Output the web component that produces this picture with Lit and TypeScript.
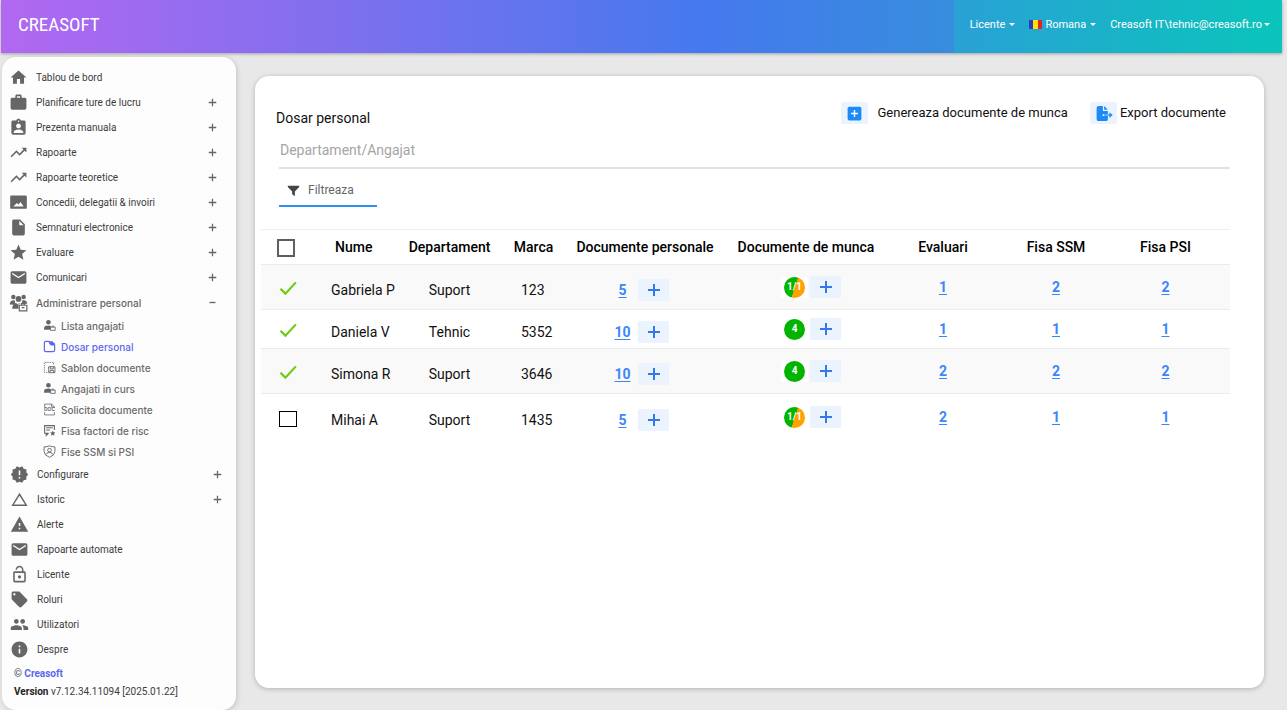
import { LitElement, html, css, svg, nothing, type TemplateResult } from "lit";
import { customElement, property } from "lit/decorators.js";
import { classMap } from "lit/directives/class-map.js";

/* 24-unit glyphs; even-odd filling keeps the cut-outs transparent. */
const glyphs: Record<string, string> = {
  home: "M10 20v-6h4v6h5v-8h3L12 3 2 12h3v8z",
  work: "M20 6h-4V4c0-1.11-.89-2-2-2h-4c-1.11 0-2 .89-2 2v2H4c-1.11 0-2 .89-2 2v11c0 1.11.89 2 2 2h16c1.11 0 2-.89 2-2V8c0-1.11-.89-2-2-2zm-6 0h-4V4h4v2z",
  badge: "M19 3h-4.18C14.4 1.84 13.3 1 12 1c-1.3 0-2.4.84-2.82 2H5c-1.1 0-2 .9-2 2v14c0 1.1.9 2 2 2h14c1.1 0 2-.9 2-2V5c0-1.1-.9-2-2-2zm-7 0c.55 0 1 .45 1 1s-.45 1-1 1-1-.45-1-1 .45-1 1-1zm0 4c1.66 0 3 1.34 3 3s-1.34 3-3 3-3-1.34-3-3 1.34-3 3-3zm6 12H6v-1.4c0-2 4-3.1 6-3.1s6 1.1 6 3.1V19z",
  trend: "M16 6l2.29 2.29-4.88 4.88-4-4L2 16.59 3.41 18l6-6 4 4 6.3-6.29L22 12V6z",
  image: "M3 3h18q1.500 0 1.500 1.500v14q0 1.500-1.500 1.500H3q-1.500 0-1.500-1.500v-14Q1.500 3 3 3zM5.500 17h13l-4-5.500-2.500 3-2-2z",
  file: "M6 2c-1.1 0-2 .9-2 2v16c0 1.1.9 2 2 2h12c1.1 0 2-.9 2-2V8l-6-6H6zm7 7V3.5L18.5 9H13z",
  star: "M12 17.27L18.18 21l-1.64-7.03L22 9.24l-7.19-.61L12 2 9.19 8.63 2 9.24l5.46 4.73L5.82 21z",
  mail: "M20 4H4c-1.1 0-2 .9-2 2v12c0 1.1.9 2 2 2h16c1.1 0 2-.9 2-2V6c0-1.1-.9-2-2-2zm0 4l-8 5-8-5V6l8 5 8-5v2z",
  release: "M23 12l-2.44-2.78.34-3.68-3.61-.82-1.89-3.18L12 3 8.6 1.54 6.71 4.72l-3.61.81.34 3.68L1 12l2.44 2.78-.34 3.69 3.61.82 1.89 3.18L12 21l3.4 1.46 1.89-3.18 3.61-.82-.34-3.68L23 12zm-10 5h-2v-2h2v2zm0-4h-2V7h2v6z",
  triangle: "M12 7.2L19 18.300H5L12 7.2zM12 3.500L1.800 20.200h20.400L12 3.500z",
  warning: "M1 21h22L12 2 1 21zm12-3h-2v-2h2v2zm0-4h-2v-4h2v4z",
  lock: "M12 17c1.1 0 2-.9 2-2s-.9-2-2-2-2 .9-2 2 .9 2 2 2zm6-9h-1V6c0-2.76-2.24-5-5-5S7 3.24 7 6h1.9c0-1.71 1.39-3.1 3.1-3.1 1.71 0 3.1 1.39 3.1 3.1v2H6c-1.1 0-2 .9-2 2v10c0 1.1.9 2 2 2h12c1.1 0 2-.9 2-2V10c0-1.1-.9-2-2-2zm0 12H6V10h12v10z",
  tag: "M21.41 11.58l-9-9C12.05 2.22 11.55 2 11 2H4c-1.1 0-2 .9-2 2v7c0 .55.22 1.05.59 1.42l9 9c.36.36.86.58 1.41.58.55 0 1.05-.22 1.41-.59l7-7c.37-.36.59-.86.59-1.41 0-.55-.23-1.06-.59-1.42zM5.5 7C4.67 7 4 6.33 4 5.5S4.67 4 5.5 4 7 4.67 7 5.5 6.33 7 5.5 7z",
  group: "M16 11c1.66 0 3-1.34 3-3s-1.34-3-3-3-3 1.34-3 3 1.34 3 3 3zm-8 0c1.66 0 3-1.34 3-3S9.66 5 8 5 5 6.34 5 8s1.34 3 3 3zm0 2c-2.33 0-7 1.17-7 3.5V19h14v-2.5c0-2.33-4.67-3.5-7-3.5zm8 0c-.29 0-.62.02-.97.05 1.16.84 1.97 1.97 1.97 3.45V19h6v-2.5c0-2.33-4.67-3.5-7-3.5z",
  info: "M12 2C6.480 2 2 6.480 2 12s4.480 10 10 10 10-4.480 10-10S17.520 2 12 2zm1 15h-2v-6h2v6zm0-8h-2V7h2v2z",
};

const employee = svg`
  <circle cx="10" cy="6" r="4.200"/>
  <path d="M2 20v-3.500C2 13.500 6 12 10 12q2.500 0 4.500.8V20z"/>
  <path d="M14 15h8.500v6H14z" fill="#fdfdfd" stroke="currentColor" stroke-width="1.600"/>
  <path d="M16.500 15v-1.800h3.500V15" fill="none" stroke="currentColor" stroke-width="1.400"/>`;

const drawings: Record<string, TemplateResult | ReturnType<typeof svg>> = {
  team: svg`
    <circle cx="5.500" cy="5" r="2.800"/><circle cx="18.500" cy="5" r="2.800"/>
    <circle cx="12" cy="7.500" r="3.600"/>
    <path d="M1 14.500Q1 9.500 5.500 9q1.200 0 2 .6-.8 2.600 1.200 4.400l-1 .8zM23 13.500Q23 9.500 18.500 9q-1.200 0-2 .6.800 2.400-1 4.400z"/>
    <path d="M4 20q0-6.500 5-7.500l3 2.500 3-2.500q1 .2 1.800.9H12V20z"/>
    <path d="M13 15.500h9.500v7H13zM16 15.500v-2h3.500v2M16 18.500h3.500" fill="none" stroke="currentColor" stroke-width="1.500"/>`,
  employee,
  folder: svg`
    <path d="M2.500 5.500Q2.500 2.500 5 2.500h4.500q1.500 0 2.200 1.200L13 6h5.500q3 0 3 3v9.500q0 3-3 3H5.500q-3 0-3-3z"
      fill="none" stroke="currentColor" stroke-width="2.200"/>
    <path d="M10 2.500h7.500l4 4.500v3H15q-2 0-2.500-2z"/>`,
  template: svg`
    <path d="M8 21H2.500V2.500h17V8" fill="none" stroke="currentColor" stroke-width="1.500" stroke-dasharray="2.600 1.600"/>
    <path d="M10.500 10.500h11.500v11H10.500zM13.500 10.500v4h5.500v-4M13 21.500v-4h6.500v4" fill="none" stroke="currentColor" stroke-width="1.700"/>`,
  doc: svg`
    <path d="M3 7.500V2h13l5 5v1M3 17v5h18v-5M15.500 2v5.500H21" fill="none" stroke="currentColor" stroke-width="1.500"/>
    <text class="doc-text" x="12" y="15.500" text-anchor="middle">DOC</text>`,
  risk: svg`
    <path d="M21 11V3H3v14h8M6 7h12M6 11h7M6 17v4l3-3" fill="none" stroke="currentColor" stroke-width="2"/>
    <path d="M18 12l1.500 3.400 3.500.4-2.600 2.400.8 3.600-3.200-1.800-3.200 1.800.8-3.600-2.600-2.400 3.500-.4z"/>`,
  shield: svg`
    <path d="M12 1.500q4 2 10 2V12q0 7-10 10.800Q2 19 2 12V3.500q6 0 10-2z" fill="none" stroke="currentColor" stroke-width="1.700"/>
    <circle cx="12" cy="9.500" r="3.400" fill="none" stroke="currentColor" stroke-width="1.700"/>
    <path d="M6 17.500q1-4 6-4t6 4" fill="none" stroke="currentColor" stroke-width="1.700"/>`,
  filter: svg`<path d="M1.500 3h21v2.500L14.500 14v8.500l-5-3.800V14L1.500 5.500z"/>`,
  addBox: svg`
    <rect x="1" y="1" width="22" height="22" rx="2.500"/>
    <path d="M12 6.500v11M6.500 12h11" stroke="#fff" stroke-width="2.200"/>`,
  exportDoc: svg`
    <path d="M1 3q0-3 3-3h7v8h8v5h-8.500v3H19v5q0 3-3 3H4q-3 0-3-3z"/>
    <path d="M13 0l6 6h-6z"/>
    <path d="M13 14.500h10" stroke="currentColor" stroke-width="2"/>
    <path d="M21.500 9.800l5.200 4.700-5.200 4.700z"/>`,
  plus: svg`<path d="M12 2v20M2 12h20" fill="none" stroke="currentColor" stroke-width="3.400"/>`,
  minus: svg`<path d="M4 12h16" fill="none" stroke="currentColor" stroke-width="3.600"/>`,
  check: svg`<path d="M2 13l6.500 6.500L22.500 4.500" fill="none" stroke="currentColor" stroke-width="2.900"/>`,
};

@customElement("ui-icon")
export class UiIcon extends LitElement {
  @property() name = "";
  static styles = css`
    :host { display: block; flex: none; width: 19px; height: 19px; }
    .glyph { display: block; width: 100%; height: 100%; fill: currentColor; fill-rule: evenodd; overflow: visible; }
    .doc-text { font: 700 9px "Liberation Sans", sans-serif; }
  `;
  render() {
    const path = glyphs[this.name];
    return html`<svg class="glyph" viewBox="0 0 24 24" aria-hidden="true">
      ${path ? svg`<path d=${path} />` : drawings[this.name] ?? nothing}
    </svg>`;
  }
}

interface NavItem { icon: string; label: string; toggle?: "plus" | "minus"; active?: boolean; }

const mainNav: NavItem[] = [
  { icon: "home", label: "Tablou de bord" },
  { icon: "work", label: "Planificare ture de lucru", toggle: "plus" },
  { icon: "badge", label: "Prezenta manuala", toggle: "plus" },
  { icon: "trend", label: "Rapoarte", toggle: "plus" },
  { icon: "trend", label: "Rapoarte teoretice", toggle: "plus" },
  { icon: "image", label: "Concedii, delegatii & invoiri", toggle: "plus" },
  { icon: "file", label: "Semnaturi electronice", toggle: "plus" },
  { icon: "star", label: "Evaluare", toggle: "plus" },
  { icon: "mail", label: "Comunicari", toggle: "plus" },
];
const adminNav: NavItem[] = [
  { icon: "employee", label: "Lista angajati" },
  { icon: "folder", label: "Dosar personal", active: true },
  { icon: "template", label: "Sablon documente" },
  { icon: "employee", label: "Angajati in curs" },
  { icon: "doc", label: "Solicita documente" },
  { icon: "risk", label: "Fisa factori de risc" },
  { icon: "shield", label: "Fise SSM si PSI" },
];
const systemNav: NavItem[] = [
  { icon: "release", label: "Configurare", toggle: "plus" },
  { icon: "triangle", label: "Istoric", toggle: "plus" },
  { icon: "warning", label: "Alerte" },
  { icon: "mail", label: "Rapoarte automate" },
  { icon: "lock", label: "Licente" },
  { icon: "tag", label: "Roluri" },
  { icon: "group", label: "Utilizatori" },
  { icon: "info", label: "Despre" },
];

@customElement("side-nav")
export class SideNav extends LitElement {
  static styles = css`
    :host {
      display: flex; flex-direction: column; flex: none; box-sizing: border-box; width: 234px;
      margin: 4px 0 0 2px; padding: 8px 0; border-radius: 14px; background: #fdfdfd;
      box-shadow: 1px 1px 5px rgba(0, 0, 0, 0.16); color: #3c3c3c; font: 10px/16px Roboto, sans-serif;
    }
    .list { margin: 0; padding: 0; list-style: none; }
    .row { display: flex; align-items: center; height: 25px; padding: 0 19px 0 7px; }
    .row.admin { color: #666; font: 500 10px/16px Inter, sans-serif; }
    .row.system { padding: 0 14px 0 8px; }
    .row.sub { height: 21px; padding: 0 19px 0 41px; color: #6b6b6b; font: 500 10px/16px Inter, sans-serif; }
    .row.sub .link { gap: 5px; }
    .row.sub .icon { width: 13px; height: 13px; }
    .link { display: flex; flex: 1; align-items: center; gap: 8px; color: inherit; text-decoration: none; }
    .icon { color: #666; }
    .row.active, .row.active .icon { color: #5b67f1; }
    .toggle { padding: 0; border: 0; background: none; color: #666; }
    .toggle ui-icon { width: 9px; height: 9px; }
    .about { margin: 3px 0 0 12px; line-height: 18px; }
    .line { margin: 0; }
    .brand { color: #5b67f1; font-weight: 700; text-decoration: none; }
    .version { color: #222; font-weight: 700; }
  `;
  private row(item: NavItem, kind: string) {
    return html`<li class=${classMap({ row: true, [kind]: true, active: !!item.active })}>
      <a class="link" href="#"><ui-icon class="icon" name=${item.icon}></ui-icon>${item.label}</a>
      ${item.toggle
        ? html`<button class="toggle" aria-label=${item.label}><ui-icon name=${item.toggle}></ui-icon></button>`
        : nothing}
    </li>`;
  }
  render() {
    return html`
      <nav>
        <ul class="list">
          ${mainNav.map((i) => this.row(i, "main"))}
          ${this.row({ icon: "team", label: "Administrare personal", toggle: "minus" }, "admin")}
          ${adminNav.map((i) => this.row(i, "sub"))}
          ${systemNav.map((i) => this.row(i, "system"))}
        </ul>
      </nav>
      <footer class="about">
        <p class="line">© <a class="brand" href="#">Creasoft</a></p>
        <p class="line"><span class="version">Version</span> v7.12.34.11094 [2025.01.22]</p>
      </footer>`;
  }
}

@customElement("top-bar")
export class TopBar extends LitElement {
  static styles = css`
    :host {
      display: flex; justify-content: space-between; height: 53px; margin: 0 5px 0 1px;
      background: linear-gradient(90deg, #b268f1, #826fee 25%, #4579ee 55%, #378dde 74%, #378dde);
      box-shadow: 0 1px 3px rgba(0, 0, 0, 0.3); font-family: Roboto, sans-serif;
    }
    .logo {
      align-self: center; margin-left: 17px; padding-bottom: 3px; color: #fff; text-decoration: none;
      font: 19px/24px "Roboto Condensed", "Liberation Sans Narrow", sans-serif;
    }
    .menu {
      display: flex; align-items: center; gap: 14px; box-sizing: border-box; padding: 0 12px 4px 16px;
      background: linear-gradient(90deg, #29a1d5, #0ac5bb);
    }
    .item {
      display: flex; align-items: center; gap: 4px; padding: 0; border: 0; background: none;
      color: #fff; font: 11px/16px Roboto, sans-serif;
    }
    .item.user { gap: 2px; }
    .label { display: flex; align-items: center; gap: 3px; }
    .caret { border: 3px solid transparent; border-top-color: #fff; border-bottom: 0; }
    .flag { width: 13px; height: 9px; background: linear-gradient(90deg, #2a3bc0 33%, #ffe100 33% 67%, #e3202d 67%); }
  `;
  render() {
    return html`
      <a class="logo" href="#">CREASOFT</a>
      <div class="menu">
        <button class="item">Licente<span class="caret"></span></button>
        <button class="item"><span class="label"><span class="flag"></span>Romana</span><span class="caret"></span></button>
        <button class="item user">Creasoft IT\\tehnic@creasoft.ro<span class="caret"></span></button>
      </div>`;
  }
}

interface Employee {
  name: string; dept: string; id: string; docs: number; work: string;
  evals: number; ssm: number; psi: number; checked: boolean;
}
const employees: Employee[] = [
  { name: "Gabriela P", dept: "Suport", id: "123", docs: 5, work: "1/1", evals: 1, ssm: 2, psi: 2, checked: true },
  { name: "Daniela V", dept: "Tehnic", id: "5352", docs: 10, work: "4", evals: 1, ssm: 1, psi: 1, checked: true },
  { name: "Simona R", dept: "Suport", id: "3646", docs: 10, work: "4", evals: 2, ssm: 2, psi: 2, checked: true },
  { name: "Mihai A", dept: "Suport", id: "1435", docs: 5, work: "1/1", evals: 2, ssm: 1, psi: 1, checked: false },
];

@customElement("staff-table")
export class StaffTable extends LitElement {
  static styles = css`
    :host { display: block; color: #111; font: 14px/20px Roboto, sans-serif; }
    .table { width: 100%; border-collapse: collapse; table-layout: fixed; border-top: 1px solid #eee; }
    .c-check { width: 56px; } .c-name { width: 88px; } .c-dept { width: 89px; }
    .c-id { width: 79px; } .c-docs { width: 144px; } .c-work { width: 178px; }
    .c-eval { width: 96px; } .c-ssm { width: 130px; } .c-psi { width: 109px; }
    .head { height: 34px; padding: 0; color: #000; font-weight: 500; white-space: nowrap; }
    .row { height: 45px; border-top: 1px solid #ebebeb; }
    .row:nth-child(even) { height: 39px; }
    .row:last-child { height: 47px; }
    .row:nth-child(odd) { background: #f9f9f9; }
    .cell { padding: 0; text-align: center; }
    .low { padding-top: 5px; }
    .name { padding-left: 14px; text-align: left; }
    .head.name { padding-left: 18px; }
    .id { padding-left: 27px; text-align: left; }
    .last { padding-right: 20px; }
    .pick { text-align: left; padding-left: 16px; }
    .tick { display: inline-grid; place-items: center; vertical-align: middle; }
    .box {
      grid-area: 1 / 1; box-sizing: border-box; width: 18px; height: 18px; margin: 0;
      appearance: none; border: 2px solid #5f5f5f; background: #fff;
    }
    .row .tick { margin-left: 2px; }
    .row .box { height: 16px; border: 1px solid #000; }
    .row .box:checked { border: 0; background: none; }
    .mark { display: none; grid-area: 1 / 1; width: 18px; height: 18px; color: #6ccb12; pointer-events: none; }
    .box:checked + .mark { display: block; }
    .num { color: #3b86fb; font-weight: 700; text-decoration: underline; text-underline-offset: 2px; text-decoration-thickness: 1px; }
    .pair { display: flex; align-items: center; justify-content: center; }
    .pair.docs { padding-right: 14px; }
    .pair.work { padding-left: 10px; gap: 2px; }
    .count { width: 31px; }
    .add {
      display: grid; place-items: center; width: 31px; height: 22px; padding: 0;
      border: 0; background: #ebf3ff; color: #3478ea;
    }
    .frame { padding: 0 3px; background: #fff; }
    .dot {
      display: grid; place-items: center; width: 21px; height: 21px; border-radius: 50%;
      background: #00b400; color: #fff; font: 700 10px/12px Roboto, sans-serif;
    }
    .dot.split { background: linear-gradient(108deg, #00b400 50%, #ffa200 52%); }
  `;
  private add(label: string) {
    return html`<button class="add" aria-label=${label}>
      <svg width="14" height="14" viewBox="0 0 14 14" aria-hidden="true">
        <path d="M7 1v12M1 7h12" stroke="currentColor" stroke-width="2" />
      </svg>
    </button>`;
  }
  private tick(label: string, checked: boolean) {
    return html`<label class="tick">
      <input class="box" type="checkbox" aria-label=${label} .checked=${checked} />
      <ui-icon class="mark" name="check"></ui-icon>
    </label>`;
  }
  render() {
    return html`<table class="table">
      <colgroup>
        <col class="c-check" /><col class="c-name" /><col class="c-dept" /><col class="c-id" /><col class="c-docs" />
        <col class="c-work" /><col class="c-eval" /><col class="c-ssm" /><col class="c-psi" />
      </colgroup>
      <thead>
        <tr>
          <th class="head pick">${this.tick("Toti", false)}</th>
          <th class="head name">Nume</th>
          <th class="head">Departament</th>
          <th class="head">Marca</th>
          <th class="head">Documente personale</th>
          <th class="head">Documente de munca</th>
          <th class="head">Evaluari</th>
          <th class="head">Fisa SSM</th>
          <th class="head last">Fisa PSI</th>
        </tr>
      </thead>
      <tbody>
        ${employees.map((e) => html`<tr class="row">
          <td class="cell pick">${this.tick(e.name, e.checked)}</td>
          <td class="cell low name">${e.name}</td>
          <td class="cell low">${e.dept}</td>
          <td class="cell low id">${e.id}</td>
          <td class="cell low">
            <div class="pair docs"><span class="count"><a class="num" href="#">${e.docs}</a></span>${this.add("Adauga document personal")}</div>
          </td>
          <td class="cell">
            <div class="pair work">
              <span class="frame"><span class=${classMap({ dot: true, split: e.work.includes("/") })}>${e.work}</span></span>
              ${this.add("Adauga document de munca")}
            </div>
          </td>
          <td class="cell"><a class="num" href="#">${e.evals}</a></td>
          <td class="cell"><a class="num" href="#">${e.ssm}</a></td>
          <td class="cell last"><a class="num" href="#">${e.psi}</a></td>
        </tr>`)}
      </tbody>
    </table>`;
  }
}

@customElement("app-root")
export class AppRoot extends LitElement {
  static styles = css`
    :host { display: flex; flex-direction: column; min-height: 100vh; background: #e8e8e8; font-family: Roboto, sans-serif; }
    .body { display: flex; flex: 1; }
    .card {
      flex: 1; min-width: 0; box-sizing: border-box; margin: 23px 23px 22px 19px; padding: 26px 34px 24px 6px;
      border-radius: 14px; background: #fff; box-shadow: 0 1px 5px rgba(0, 0, 0, 0.24);
    }
    .top { display: flex; align-items: flex-start; justify-content: space-between; padding: 0 4px 0 15px; }
    .title { margin: 6px 0 0; color: #111; font: 14px/20px Roboto, sans-serif; }
    .actions { display: flex; gap: 22px; }
    .action {
      display: flex; align-items: center; gap: 9px; padding: 0; border: 0; background: none;
      color: #111; font: 13px/22px Roboto, sans-serif;
    }
    .action.wide { gap: 3px; }
    .tile { display: grid; place-items: center; width: 27px; height: 22px; border-radius: 2px; background: #ebf3ff; color: #1c8bf5; }
    .tile ui-icon { width: 15px; height: 15px; }
    .search {
      display: block; box-sizing: border-box; width: calc(100% - 18px); height: 36px; margin: 5px 0 0 18px; padding: 0 1px;
      border: 0; border-bottom: 2px solid #e2e2e2; background: none; font: 14px/20px Roboto, sans-serif; outline: 0;
    }
    .search::placeholder { color: #a5a5a5; opacity: 1; }
    .filter {
      display: flex; align-items: center; gap: 8px; width: 98px; height: 34px; margin: 4px 0 22px 18px; padding: 2px 0 0 8px;
      border: 0; border-bottom: 2px solid #2f8ff0; background: none; color: #666; font: 12px/16px Roboto, sans-serif;
    }
    .filter ui-icon { width: 13px; height: 13px; color: #444; }
  `;
  render() {
    return html`
      <top-bar></top-bar>
      <div class="body">
        <side-nav></side-nav>
        <main class="card">
          <div class="top">
            <h1 class="title">Dosar personal</h1>
            <div class="actions">
              <button class="action"><span class="tile"><ui-icon name="addBox"></ui-icon></span>Genereaza documente de munca</button>
              <button class="action wide"><span class="tile"><ui-icon name="exportDoc"></ui-icon></span>Export documente</button>
            </div>
          </div>
          <input class="search" type="text" aria-label="Departament/Angajat" placeholder="Departament/Angajat" />
          <button class="filter"><ui-icon name="filter"></ui-icon>Filtreaza</button>
          <staff-table></staff-table>
        </main>
      </div>`;
  }
}
